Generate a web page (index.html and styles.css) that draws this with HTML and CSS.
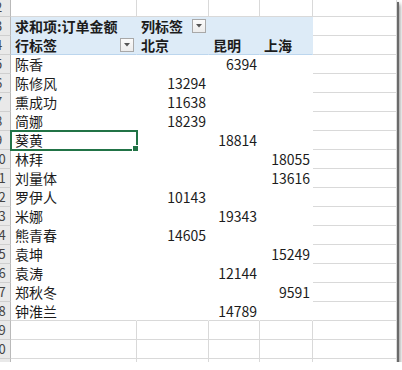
FILE: index.html
```html
<!DOCTYPE html>
<html lang="zh-CN">
<head>
<meta charset="utf-8">
<title>数据透视表</title>
<link rel="stylesheet" href="styles.css">
</head>
<body>
<div class="frame">
  <div class="sheet">
    <div class="rh">2</div><div class="c"></div><div class="c"></div><div class="c"></div><div class="c"></div><div class="c"></div>

    <div class="rh">3</div>
    <div class="c pv hd b">求和项:订单金额</div>
    <div class="c pv hd b split"><span>列标签</span><span class="dd"><svg width="6" height="4" viewBox="0 0 6 4"><path d="M0 0h6L3 3.5z" fill="#555"/></svg></span></div>
    <div class="c pv hd"></div>
    <div class="c pv hd"></div>
    <div class="c"></div>

    <div class="rh">4</div>
    <div class="c pv hd hl b split"><span>行标签</span><span class="dd"><svg width="6" height="4" viewBox="0 0 6 4"><path d="M0 0h6L3 3.5z" fill="#555"/></svg></span></div>
    <div class="c pv hd hl b">北京</div>
    <div class="c pv hd hl b">昆明</div>
    <div class="c pv hd hl b">上海</div>
    <div class="c"></div>

    <div class="rh">5</div><div class="c pv">陈香</div><div class="c pv n"></div><div class="c pv n">6394</div><div class="c pv n"></div><div class="c"></div>
    <div class="rh">6</div><div class="c pv">陈修风</div><div class="c pv n">13294</div><div class="c pv n"></div><div class="c pv n"></div><div class="c"></div>
    <div class="rh">7</div><div class="c pv">熏成功</div><div class="c pv n">11638</div><div class="c pv n"></div><div class="c pv n"></div><div class="c"></div>
    <div class="rh">8</div><div class="c pv">简娜</div><div class="c pv n">18239</div><div class="c pv n"></div><div class="c pv n"></div><div class="c"></div>
    <div class="rh">9</div><div class="c pv sel">葵黄</div><div class="c pv n"></div><div class="c pv n">18814</div><div class="c pv n"></div><div class="c"></div>
    <div class="rh">10</div><div class="c pv">林拜</div><div class="c pv n"></div><div class="c pv n"></div><div class="c pv n">18055</div><div class="c"></div>
    <div class="rh">11</div><div class="c pv">刘量体</div><div class="c pv n"></div><div class="c pv n"></div><div class="c pv n">13616</div><div class="c"></div>
    <div class="rh">12</div><div class="c pv">罗伊人</div><div class="c pv n">10143</div><div class="c pv n"></div><div class="c pv n"></div><div class="c"></div>
    <div class="rh">13</div><div class="c pv">米娜</div><div class="c pv n"></div><div class="c pv n">19343</div><div class="c pv n"></div><div class="c"></div>
    <div class="rh">14</div><div class="c pv">熊青春</div><div class="c pv n">14605</div><div class="c pv n"></div><div class="c pv n"></div><div class="c"></div>
    <div class="rh">15</div><div class="c pv">袁坤</div><div class="c pv n"></div><div class="c pv n"></div><div class="c pv n">15249</div><div class="c"></div>
    <div class="rh">16</div><div class="c pv">袁涛</div><div class="c pv n"></div><div class="c pv n">12144</div><div class="c pv n"></div><div class="c"></div>
    <div class="rh">17</div><div class="c pv">郑秋冬</div><div class="c pv n"></div><div class="c pv n"></div><div class="c pv n">9591</div><div class="c"></div>
    <div class="rh">18</div><div class="c pv last">钟淮兰</div><div class="c pv n last"></div><div class="c pv n last">14789</div><div class="c pv n last"></div><div class="c"></div>

    <div class="rh">19</div><div class="c"></div><div class="c"></div><div class="c"></div><div class="c"></div><div class="c"></div>
    <div class="rh">20</div><div class="c"></div><div class="c"></div><div class="c"></div><div class="c"></div><div class="c"></div>
    <div class="rh">21</div><div class="c"></div><div class="c"></div><div class="c"></div><div class="c"></div><div class="c"></div>
  </div>
</div>
</body>
</html>
```

FILE: styles.css
```css
html, body {
  margin: 0;
  padding: 0;
  background: #ffffff;
  overflow: hidden;
}

.frame {
  width: 397px;
  height: 362px;
  overflow: hidden;
  background: #ffffff;
  box-shadow: 2px 2px 0 #6a6a6a, 3px 4px 4px rgba(0, 0, 0, 0.45);
}

.sheet {
  display: grid;
  grid-template-columns: 24px 126px 72px 51px 53px 84px;
  grid-auto-rows: 19px;
  margin-left: -13px;
  margin-top: -2px;
  font-family: "Noto Sans CJK SC", "Noto Sans", sans-serif;
  font-size: 14px;
  color: #1c1c1c;
}

.rh {
  box-sizing: border-box;
  background: #e9e9e9;
  border-right: 1px solid #b9b9b9;
  border-bottom: 1px solid #cfcfcf;
  color: #444444;
  font-family: "Noto Sans CJK SC", "Noto Sans", sans-serif;
  font-size: 13px;
  line-height: 18px;
  text-align: center;
}

.c {
  box-sizing: border-box;
  border-right: 1px solid #d9d9d9;
  border-bottom: 1px solid #d9d9d9;
  line-height: 18px;
  padding: 0 3px 0 4px;
  white-space: nowrap;
  overflow: visible;
}

.pv {
  border-color: transparent;
  background: #ffffff;
}

.pv.last {
  border-bottom-color: #d9d9d9;
}

.hd {
  background: #ddebf7;
}

.hl {
  border-bottom-color: #bcd6ee;
}

.b {
  font-weight: 700;
}

.n {
  text-align: right;
  padding: 0 2px 0 0;
}

.split {
  display: flex;
  justify-content: space-between;
  align-items: center;
  padding-right: 2px;
}

.dd {
  box-sizing: border-box;
  width: 14px;
  height: 14px;
  border: 1px solid #a8a8a8;
  background: linear-gradient(#fbfbfb, #ececec);
  display: flex;
  align-items: center;
  justify-content: center;
}

.sel {
  position: relative;
  outline: 2px solid #217346;
  outline-offset: -1px;
}

.sel::after {
  content: "";
  position: absolute;
  right: -3px;
  bottom: -3px;
  width: 5px;
  height: 5px;
  background: #217346;
  border: 1px solid #ffffff;
}
```
